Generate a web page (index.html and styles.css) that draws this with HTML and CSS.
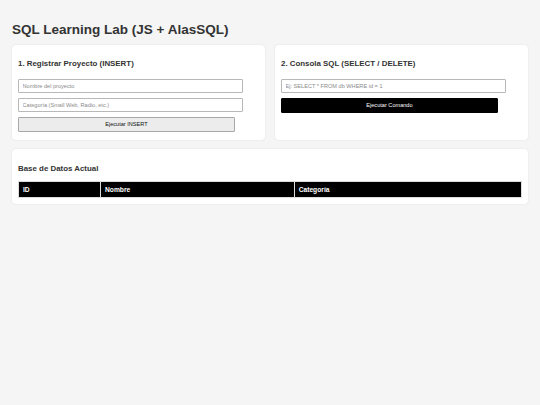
FILE: index.html
```html
<!DOCTYPE html>
<html lang="es">
<head>
<meta charset="utf-8">
<title>SQL Learning Lab</title>
<link rel="stylesheet" href="styles.css">
</head>
<body>
<div class="page">
  <h1 class="title">SQL Learning Lab (JS + AlasSQL)</h1>
  <div class="grid">
    <section class="card">
      <h3 class="card-title">1. Registrar Proyecto (INSERT)</h3>
      <div class="stack">
        <input class="field" type="text" placeholder="Nombre del proyecto">
        <input class="field" type="text" placeholder="Categoría (Small Web, Radio, etc.)">
        <button class="btn btn-light" type="button">Ejecutar INSERT</button>
      </div>
    </section>
    <section class="card">
      <h3 class="card-title">2. Consola SQL (SELECT / DELETE)</h3>
      <div class="stack">
        <input class="field" type="text" placeholder="Ej: SELECT * FROM db WHERE id = 1">
        <button class="btn btn-dark" type="button">Ejecutar Comando</button>
      </div>
    </section>
  </div>
  <section class="card card-wide">
    <h3 class="card-title table-title">Base de Datos Actual</h3>
    <table class="db-table">
      <colgroup>
        <col class="col-id">
        <col class="col-name">
        <col class="col-cat">
      </colgroup>
      <thead>
        <tr>
          <th>ID</th>
          <th>Nombre</th>
          <th>Categoría</th>
        </tr>
      </thead>
      <tbody></tbody>
    </table>
  </section>
</div>
</body>
</html>
```

FILE: styles.css
```css
html, body {
  margin: 0;
  padding: 0;
  background: #f5f5f5;
}

body {
  font-family: "Liberation Sans", Arial, sans-serif;
  color: #333;
}

.page {
  padding: 8px 12px;
}

.title {
  font-size: 13.5px;
  font-weight: bold;
  margin: 14px 0 8px;
  color: #333;
}

.grid {
  display: grid;
  grid-template-columns: 1fr 1fr;
  gap: 10px;
}

.card {
  background: #fff;
  border-radius: 4px;
  padding: 6px 6px 8px;
  box-shadow: 0 0 2px rgba(0, 0, 0, 0.1);
}

.card-wide {
  margin-top: 9px;
  padding-bottom: 6px;
}

.card-title {
  font-size: 7.9px;
  font-weight: bold;
  margin: 8px 0 11px;
  color: #333;
}

.table-title {
  margin-top: 9px;
  margin-bottom: 8px;
}

.stack {
  display: flex;
  flex-direction: column;
  align-items: flex-start;
  gap: 5px;
}

.field {
  box-sizing: border-box;
  width: calc(90% + 8px);
  height: 14px;
  padding: 0 3.5px;
  border: 0.6px solid #b8b8b8;
  border-radius: 1px;
  font-family: "Liberation Sans", Arial, sans-serif;
  font-size: 5.6px;
  color: #333;
  background: #fff;
  outline: none;
}

.field::placeholder {
  color: #8a8a8a;
}

.btn {
  box-sizing: border-box;
  width: 90%;
  height: 14.5px;
  padding: 0;
  font-family: "Liberation Sans", Arial, sans-serif;
  font-size: 5.6px;
  border-radius: 1px;
  cursor: pointer;
}

.btn-light {
  background: #ececec;
  border: 0.6px solid #a8a8a8;
  color: #111;
}

.btn-dark {
  background: #000;
  border: 0.6px solid #000;
  color: #fff;
}

.db-table {
  width: 100%;
  border-collapse: collapse;
  table-layout: fixed;
}

.col-id { width: 16.3%; }
.col-name { width: 38.5%; }
.col-cat { width: 45.2%; }

.db-table th {
  background: #000;
  color: #fff;
  text-align: left;
  font-size: 6.7px;
  font-weight: bold;
  height: 15px;
  padding: 0 4px;
  border: 0.6px solid #ddd;
}
```
